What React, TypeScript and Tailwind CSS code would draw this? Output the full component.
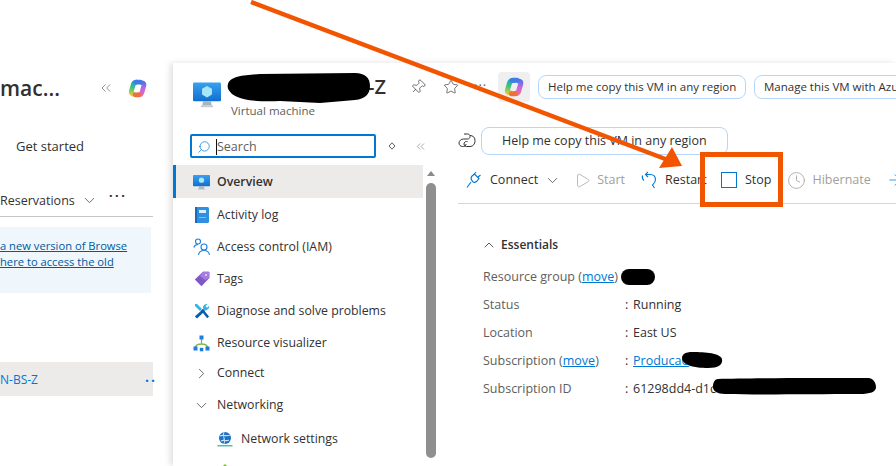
import { ChevronDown, ChevronRight, ChevronUp, ChevronsLeft, Play, Clock, ArrowRight, Pin, Star, Search } from 'lucide-react'

const font = { fontFamily: '"Open Sans", "Noto Sans", sans-serif' }

function Copilot({ size = 20 }: { size?: number }) {
  return (
    <svg width={size} height={size} viewBox="0 0 20 20" className="shrink-0" fill="none" strokeWidth="5" strokeLinecap="round">
      <defs>
        <linearGradient id="cpA" gradientUnits="userSpaceOnUse" x1="10" y1="2" x2="5" y2="18">
          <stop offset="0" stopColor="#1c8fe8" />
          <stop offset="0.5" stopColor="#3ec47c" />
          <stop offset="1" stopColor="#f6c63a" />
        </linearGradient>
        <linearGradient id="cpB" gradientUnits="userSpaceOnUse" x1="14" y1="3" x2="13" y2="18">
          <stop offset="0" stopColor="#5a70ea" />
          <stop offset="0.5" stopColor="#c568dc" />
          <stop offset="1" stopColor="#ee6a9c" />
        </linearGradient>
      </defs>
      <path d="M9 3.400C7 3.400 6 4.400 5.500 6L3.500 12.800C3 14.800 4 15.800 5.800 15.800" stroke="url(#cpA)" />
      <path d="M15 4.200C16.500 4.200 17.200 5.200 16.700 7L14.700 14C14.200 15.800 13 16.600 11 16.600" stroke="url(#cpB)" />
      <path d="M8.500 3.300H13" stroke="#3f7ce8" />
      <path d="M7.500 16.700H11" stroke="#f0703c" />
    </svg>
  )
}

function VmIcon({ size = 18, cube = false }: { size?: number; cube?: boolean }) {
  return (
    <svg width={size} height={size} viewBox="0 0 18 18" className="shrink-0">
      <defs>
        <linearGradient id="vmG" x1="0" y1="0" x2="0" y2="1">
          <stop offset="0" stopColor="#3aa0ee" />
          <stop offset="1" stopColor="#0f6fd0" />
        </linearGradient>
      </defs>
      <rect x="0" y="1" width="18" height="12" rx="0.8" fill="url(#vmG)" />
      <path d="M6.500 13h5l.6 2.800h-6.200Z" fill="#a9b4bd" />
      <rect x="5" y="15.600" width="8" height="1.200" rx="0.5" fill="#c6ccd2" />
      {cube ? (
        <path d="M9 3.200l3.200 1.800v3.700L9 10.600 5.800 8.700V5Z" fill="#a5e6f7" />
      ) : (
        <circle cx="9" cy="6.500" r="2.800" fill="#a5e6f7" />
      )}
    </svg>
  )
}

function NavIcon({ kind }: { kind: string }) {
  if (kind === 'overview') return <VmIcon size={17} />
  if (kind === 'log')
    return (
      <svg width="16" height="18" viewBox="0 0 16 18">
        <rect x="1" y="1" width="14" height="16" rx="1.500" fill="#2f8fe0" />
        <rect x="1" y="1" width="2" height="16" fill="#1a6cb8" />
        <rect x="5" y="4" width="7" height="3" fill="#d9eefb" />
        <rect x="5" y="11" width="7" height="1" fill="#7fc0ee" />
      </svg>
    )
  if (kind === 'iam')
    return (
      <svg width="17" height="18" viewBox="0 0 17 18" fill="none" stroke="#1a7fe0" strokeWidth="1.100">
        <circle cx="5" cy="3.500" r="2.500" />
        <path d="M.8 9.500c.6-2 2.200-3 4.200-3" />
        <circle cx="11" cy="9" r="3" />
        <path d="M5.500 17c.4-3 2.600-4.500 5.500-4.500s5.100 1.500 5.500 4.500" />
      </svg>
    )
  if (kind === 'tag')
    return (
      <svg width="16" height="16" viewBox="0 0 16 16">
        <path d="M9 .800h5.500c.5 0 .8.300.8.800V7L7.500 15.200.8 8.500Z" fill="#7e57c8" />
        <path d="M9 .800h5.500c.5 0 .8.300.8.800V7L11 9 6 5Z" fill="#a67be0" />
        <circle cx="12" cy="4" r="1.100" fill="#e4d6f7" />
      </svg>
    )
  if (kind === 'tools')
    return (
      <svg width="16" height="16" viewBox="0 0 16 16">
        <path d="M.8 13.500L9 6l2 2-8 7.500Z" fill="#0b5ea8" />
        <path d="M7 7.500l2-1.500 6 7.500-1.800 1.800Z" fill="#0b5ea8" />
        <path d="M1 1l2 0 5 5-2 2-5-5Z" fill="#32b4e6" />
        <path d="M9 5.500C8.600 3 10.500.6 13.500 1l-2 2.200 1.600 1.600 2-2c.4 3-2 5-4.500 4.500Z" fill="#32b4e6" />
      </svg>
    )
  return (
    <svg width="17" height="17" viewBox="0 0 17 17">
      <path d="M8.500 4v5M2.500 13c0-2.500 2-4 6-4s6 1.500 6 4" fill="none" stroke="#7fba3c" strokeWidth="1.300" />
      <rect x="6.500" y="0.500" width="4" height="4" fill="#1a7fe0" />
      <rect x="0.500" y="11.500" width="4" height="4" fill="#1a7fe0" />
      <rect x="12.500" y="11.500" width="4" height="4" fill="#1a7fe0" />
      <rect x="6.800" y="12.800" width="3.500" height="3.500" fill="#1a7fe0" />
    </svg>
  )
}

const navItems = [
  { label: 'Activity log', kind: 'log' },
  { label: 'Access control (IAM)', kind: 'iam' },
  { label: 'Tags', kind: 'tag' },
  { label: 'Diagnose and solve problems', kind: 'tools' },
  { label: 'Resource visualizer', kind: 'graph' },
]

const essentials = [
  { label: 'Status', value: 'Running' },
  { label: 'Location', value: 'East US' },
]

function LeftColumn() {
  return (
    <div className="w-[173px] shrink-0 pt-[70px] text-[#323130]">
      <div className="flex h-[36px] items-center">
        <span className="w-[98px] whitespace-nowrap text-[21px] font-semibold leading-[36px]">mac...</span>
        <ChevronsLeft size={16} strokeWidth={1} className="text-[#605e5c]" />
        <span className="ml-[14px]"><Copilot size={19} /></span>
      </div>
      <div className="mt-[22px] h-[36px] pl-[16px] text-[13px] leading-[36px]">Get started</div>
      <div className="mt-[18px] flex h-[35px] w-[153px] items-start border-b border-[#c8c6c4] pt-[10px] text-[12.500px]">
        <span className="leading-[18px]">Reservations</span>
        <ChevronDown size={17} strokeWidth={1} className="ml-[6px]" />
        <span className="ml-[11px] -mt-[4px] text-[15px] font-semibold leading-[14px] tracking-[2px]">···</span>
      </div>
      <div className="mt-[10px] flex h-[66px] w-[151px] flex-col bg-[#eff6fc] pt-[11px] text-[11.200px] leading-[16px] text-[#005a9e]">
        <span className="whitespace-nowrap underline">a new version of Browse</span>
        <span className="whitespace-nowrap underline">here to access the old</span>
      </div>
      <div className="mt-[69px] flex h-[34px] w-[153px] items-center bg-[#edebe9] pt-[2px] text-[12px] text-[#0078d4]">
        <span className="w-[145px] whitespace-nowrap">N-BS-Z</span>
        <span className="w-[8px] whitespace-nowrap text-[14px] font-bold tracking-[2px]">··</span>
      </div>
    </div>
  )
}

function NavMenu() {
  return (
    <div className="flex w-[265px] shrink-0">
      <div className="w-[250px] shrink-0 text-[12.300px] text-[#323130]">
        <div className="mb-[1px] flex h-[33px] items-center border-l-[3px] border-[#0078d4] bg-[#edebe9] pl-[17px] pt-[2px]">
          <NavIcon kind="overview" />
          <span className="ml-[7px] font-semibold">Overview</span>
        </div>
        {navItems.map(item => (
          <div key={item.label} className="flex h-[32px] items-center pl-[20px]">
            <span className="flex w-[17px] justify-center"><NavIcon kind={item.kind} /></span>
            <span className="ml-[7px] whitespace-nowrap">{item.label}</span>
          </div>
        ))}
        <div className="flex h-[29px] items-center pl-[20px]">
          <ChevronRight size={17} strokeWidth={1} className="text-[#323130]" />
          <span className="ml-[7px]">Connect</span>
        </div>
        <div className="flex h-[34px] items-center pl-[20px]">
          <ChevronDown size={17} strokeWidth={1} className="text-[#323130]" />
          <span className="ml-[7px]">Networking</span>
        </div>
        <div className="flex h-[34px] items-center pl-[44px]">
          <svg width="16" height="16" viewBox="0 0 16 16">
            <circle cx="8" cy="7" r="6" fill="#1f6fc4" />
            <path d="M3 5c3-2 6 1 10-1M4 10c3-2 5 1 8-1M7 1c-2 4 2 8 0 12" fill="none" stroke="#bfe3f7" strokeWidth="1.100" />
            <rect x="0.500" y="14" width="15" height="1.500" fill="#4fc3a8" />
          </svg>
          <span className="ml-[8px] whitespace-nowrap">Network settings</span>
        </div>
        <div className="flex h-[32px] items-center pl-[44px]">
          <svg width="16" height="16" viewBox="0 0 16 16">
            <path d="M8 0l6 6H2Z" fill="#7fba3c" />
          </svg>
        </div>
      </div>
      <div className="ml-[3px] flex w-[10px] flex-col items-center">
        <span className="mt-[6px] h-0 w-0 border-x-[4px] border-b-[5px] border-x-transparent border-b-[#8a8a8a]" />
        <span className="mt-[7px] h-[275px] w-[10px] shrink-0 rounded-[5px] bg-[#8f8f8f]" />
      </div>
    </div>
  )
}

function Toolbar() {
  return (
    <div className="flex h-[49px] items-center border-b border-[#d6d6d6] pl-[8px] pt-[2px] text-[12.500px] text-[#323130]">
      <svg width="16" height="18" viewBox="0 0 16 18" fill="none" stroke="#0078d4" strokeWidth="1.100" className="shrink-0">
        <path d="M5.500 5.500l3-2.500 4.500 4.500-2.500 3c-1.500 1.200-3 1-4-.2s-2-3-1-4.800Z" />
        <path d="M7.500 4l2.500-3M11.500 6.500l3-2.500M5 11l-4 5.500" />
      </svg>
      <span className="ml-[8px]">Connect</span>
      <ChevronDown size={17} strokeWidth={1} className="ml-[6px] shrink-0" />
      <Play size={17} strokeWidth={1} className="ml-[13px] shrink-0 text-[#a19f9d]" />
      <span className="ml-[6px] text-[#a19f9d]">Start</span>
      <svg width="16" height="18" viewBox="0 0 16 18" fill="none" stroke="#0078d4" strokeWidth="1.100" className="ml-[16px] shrink-0">
        <path d="M5 3.500h4.500c3 0 5 2.200 5 5s-1.500 4-3 5.500l2 3" />
        <path d="M7 1L4.500 3.500 7 6" />
        <path d="M1.500 4.500c-.5 2 0 4 1.500 5" />
      </svg>
      <span className="ml-[8px] w-[36px] shrink-0 whitespace-nowrap">Restart</span>
      <span className="ml-[20px] h-[16px] w-[16px] shrink-0 border border-[#0078d4]" />
      <span className="ml-[8px]">Stop</span>
      <Clock size={19} strokeWidth={1} className="ml-[15px] shrink-0 text-[#a19f9d]" />
      <span className="ml-[7px] text-[#a19f9d]">Hibernate</span>
      <ArrowRight size={18} strokeWidth={1} className="ml-[15px] shrink-0 text-[#0078d4]" />
    </div>
  )
}

function Essentials() {
  return (
    <div className="pl-[25px] pt-[30px] text-[12.500px] text-[#323130]">
      <div className="flex h-[22px] items-center">
        <ChevronUp size={16} strokeWidth={1.200} className="-ml-[2px]" />
        <span className="ml-[4px] text-[12px] font-semibold">Essentials</span>
      </div>
      <div className="mt-[7px] flex h-[28px] items-center text-[#605e5c]">
        <span className="w-[138px] whitespace-nowrap">
          Resource group (<span className="text-[#0078d4] underline">move</span>)
        </span>
      </div>
      {essentials.map(row => (
        <div key={row.label} className="flex h-[28px] items-center">
          <span className="w-[142px] text-[#605e5c]">{row.label}</span>
          <span className="w-[8px]">:</span>
          <span>{row.value}</span>
        </div>
      ))}
      <div className="flex h-[28px] items-center">
        <span className="w-[142px] text-[#605e5c]">
          Subscription (<span className="text-[#0078d4] underline">move</span>)
        </span>
        <span className="w-[8px]">:</span>
        <span className="text-[#0078d4] underline">Producao</span>
      </div>
      <div className="flex h-[28px] items-center">
        <span className="w-[142px] text-[#605e5c]">Subscription ID</span>
        <span className="w-[8px]">:</span>
        <span className="whitespace-nowrap">61298dd4-d1c</span>
      </div>
    </div>
  )
}

function Chip({ text, className }: { text: string; className: string }) {
  return (
    <div className={`flex items-center whitespace-nowrap rounded-[8px] border border-[#b4d6fa] text-[#323130] ${className}`}>
      {text}
    </div>
  )
}

function VmPanel() {
  return (
    <div className="mt-[63px] flex min-w-0 flex-1 flex-col bg-white shadow-[-3px_0_6px_rgba(0,0,0,0.12)]">
      <div className="flex h-[39px] shrink-0 items-start pl-[20px] pt-[9px]">
        <span className="mt-[9px]"><VmIcon size={28} cube /></span>
        <div className="ml-[10px] w-[155px] shrink-0">
          <div className="mt-[1px] h-[28px] text-right text-[20px] font-semibold leading-[28px] text-[#323130]">-Z</div>
          <div className="mt-[3px] whitespace-nowrap text-[11.500px] leading-[14px] text-[#605e5c]">Virtual machine</div>
        </div>
        <Pin size={16} strokeWidth={1} className="ml-[24px] mt-[7px] shrink-0 rotate-45 text-[#323130]" />
        <Star size={16} strokeWidth={1} className="ml-[17px] mt-[7px] shrink-0 text-[#323130]" />
        <span className="ml-[15px] mt-[4px] w-[14px] shrink-0 text-[13px] tracking-[1px] text-[#605e5c]">···</span>
        <div className="ml-[10px] flex h-[30px] w-[32px] shrink-0 items-center justify-center rounded-[4px] bg-[#efefef]">
          <Copilot size={20} />
        </div>
        <Chip text="Help me copy this VM in any region" className="ml-[8px] mt-[3px] h-[24px] w-[208px] shrink-0 px-[9px] text-[11.500px]" />
        <Chip text="Manage this VM with Azure" className="ml-[8px] mt-[3px] h-[24px] shrink-0 px-[9px] text-[11.500px]" />
      </div>
      <div className="mt-[32px] flex min-h-0 flex-1">
        <div className="flex shrink-0 flex-col">
          <div className="flex h-[31px] shrink-0 items-start pl-[17px]">
            <div className="flex h-[24px] w-[186px] items-center rounded-[2px] border-2 border-[#0078d4] pl-[5px] pt-[1px] text-[12.500px] text-[#605e5c]">
              <Search size={14} strokeWidth={1.200} className="-scale-x-100 text-[#0078d4]" />
              <span className="ml-[5px] border-l border-[#111] leading-[16px]">Search</span>
            </div>
            <svg width="8" height="8" viewBox="0 0 8 8" fill="none" stroke="#605e5c" className="ml-[12px] mt-[8px]">
              <path d="M4 .8L7 4 4 7.200 1 4Z" />
            </svg>
            <ChevronsLeft size={13} strokeWidth={1} className="ml-[18px] mt-[6px] text-[#605e5c]" />
          </div>
          <NavMenu />
        </div>
        <div className="-mt-[7px] ml-[20px] min-w-0 flex-1 overflow-hidden">
          <div className="flex h-[28px] items-center">
            <svg width="18" height="18" viewBox="0 0 18 18" fill="none" stroke="#323130" strokeWidth="1" className="shrink-0">
              <path d="M6 2h3.500c1.500 0 2.500 1 2.500 2.500S11 7 9.500 7H5.500C3 7 1 9 1 11s1.500 3.500 3.500 3.500h1c1.500 0 2.500-1 2.500-2.500" />
              <path d="M12 3.500c2.500 0 5 1.500 5 5 0 3.500-2 6-5 6H8.500c-1.500 0-2.500-1-2.500-2.500s1-2.500 2.500-2.500h1" />
            </svg>
            <Chip text="Help me copy this VM in any region" className="ml-[5px] h-[28px] w-[247px] shrink-0 pl-[20px] text-[12.500px]" />
          </div>
          <Toolbar />
          <Essentials />
        </div>
      </div>
    </div>
  )
}

export default function App() {
  return (
    <div className="relative flex h-[466px] w-[896px] overflow-hidden bg-white" style={font}>
      <LeftColumn />
      <VmPanel />

      {/* redaction marks and annotation drawn on top of the screenshot */}
      <svg className="absolute left-0 top-0" width="896" height="466" viewBox="0 0 896 466">
        <path d="M228 84C230 76 245 75 260 74L355 73C365 73 370 78 370 86C370 94 365 99 355 100L320 103L280 101C255 102 240 100 232 94C228 90 227 88 228 84Z" fill="#000" />
        <rect x="621" y="269" width="34" height="16" rx="8" fill="#000" />
        <path d="M682 358c0-4 4-6 10-6 14 0 28 1 30 7 1 6-4 9-14 9-14 0-26-3-26-10Z" fill="#000" />
        <path d="M718 379c30-1 100-1 150-1 6 0 8 6 8 9 0 5-6 7-16 7-50 0-100 1-135 0-8 0-12-3-12-7 0-5 2-8 5-8Z" fill="#000" />
        <path d="M251 2L668 160" stroke="#f25500" strokeWidth="4.500" fill="none" />
        <path d="M682 166L672 147L659 168Z" fill="#f25500" />
      </svg>
      <div className="absolute left-[700px] top-[152px] h-[55px] w-[83px] border-[5px] border-[#f25500]" />
    </div>
  )
}
